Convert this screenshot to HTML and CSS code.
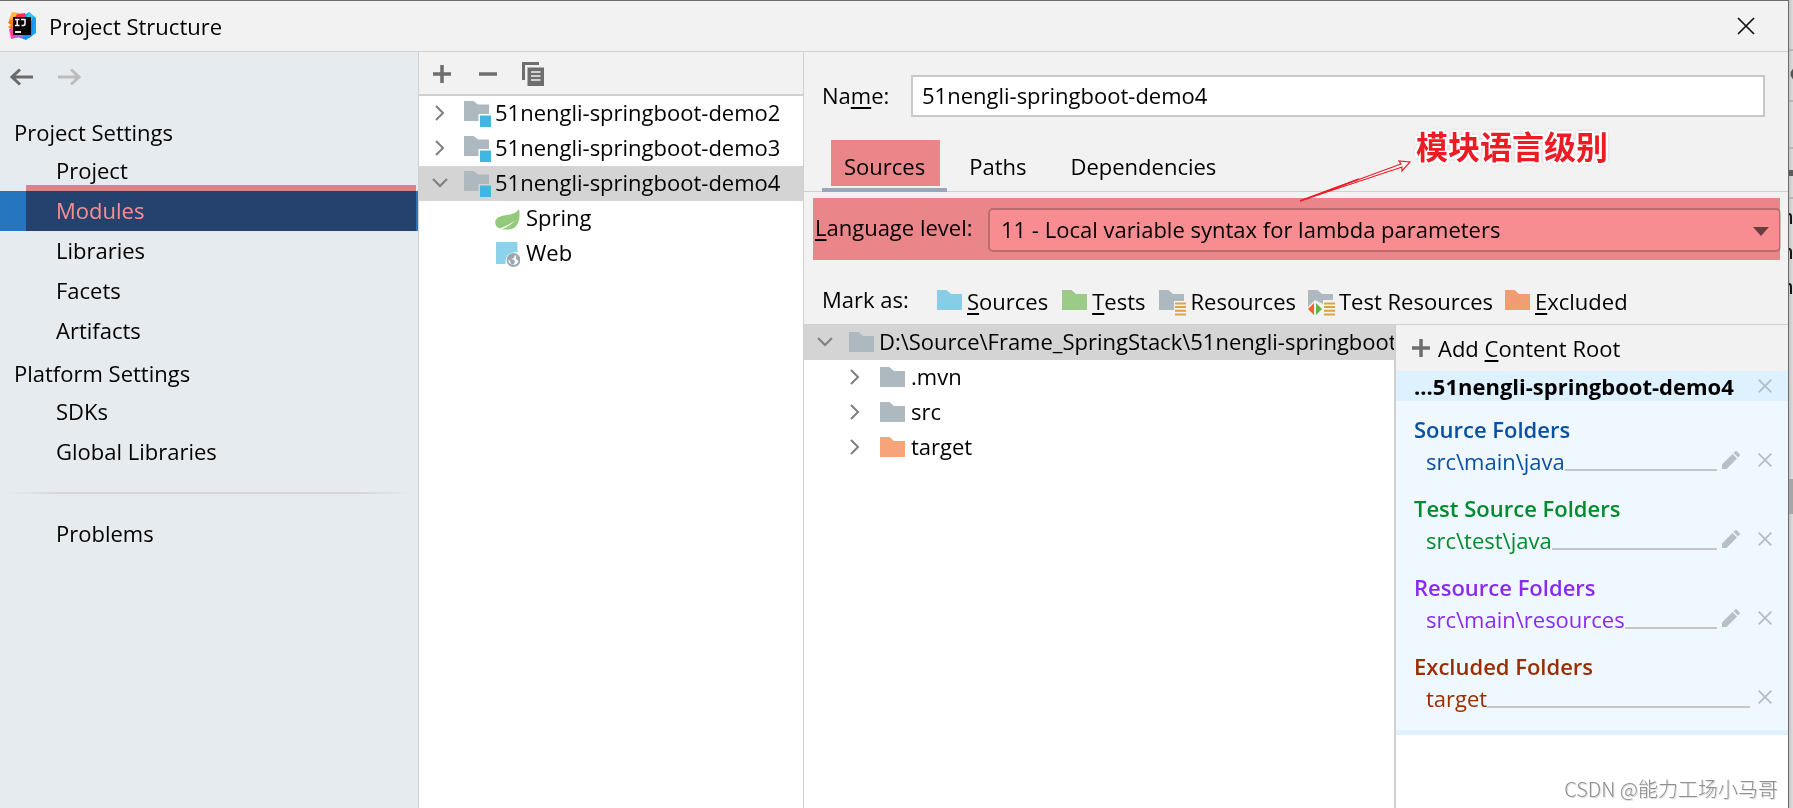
FILE: index.html
```
<!DOCTYPE html>
<html lang="en">
<head>
<meta charset="utf-8">
<title>Project Structure</title>
<link rel="stylesheet" href="styles.css">
</head>
<body>
<svg class="defs" aria-hidden="true">
  <symbol id="folder" viewBox="0 0 25 20"><path d="M0 0h9.500l4.500 4h11v16H0z" fill="currentColor"/></symbol>
  <symbol id="right" viewBox="0 0 16 16"><path d="M4 1l7 7-7 7" fill="none" stroke="#7f7f7f" stroke-width="2"/></symbol>
  <symbol id="down" viewBox="0 0 16 16"><path d="M1 4l7 7 7-7" fill="none" stroke="#7f7f7f" stroke-width="2"/></symbol>
  <symbol id="plus" viewBox="0 0 18 18"><path d="M9 0v18M0 9h18" stroke="#6e6e6e" stroke-width="3.500"/></symbol>
  <symbol id="cross" viewBox="0 0 14 14"><path d="M.7.700l12.600 12.600M13.300.700L.7 13.300" stroke="#b3bdc7" stroke-width="1.800"/></symbol>
  <symbol id="pencil" viewBox="0 0 18 18"><path d="M0 18v-4.500L10.500 3 15 7.500 4.500 18zM11.600 1.900L13 .6q1-1 2 0L17.400 3q1 1 0 2L16.100 6.400z" fill="#b7bfc7"/></symbol>
  <symbol id="module" viewBox="0 0 28 26"><path d="M0 0h9.500l4.500 3.500h11V13h-10.500v7H0z" fill="#adb8bf"/><path d="M16 14.500h11V26H16z" fill="#40b6e0"/></symbol>
  <symbol id="lines" viewBox="0 0 11 14"><path d="M0 1.500h11M0 5h11M0 8.700h11M0 12.500h11" stroke="#dda343" stroke-width="2"/></symbol>
</svg>

<div class="dialog">
  <header class="titlebar">
    <svg class="logo" viewBox="0 0 28 28">
      <path d="M4 0l7 1 2 4-8 6-4-3z" fill="#fdb83c"/><path d="M9 2l8-1 4 7-12 4-4-3z" fill="#fe315d"/>
      <path d="M2 7l6 3-1 9-7-4 3-2-3-2z" fill="#ff7a24"/><path d="M17 3l4-3 7 6v15l-7 5-6-8z" fill="#12a5f5"/>
      <path d="M20 1l6 5-2 18-6 4-8-3 3-8z" fill="#1690f7"/><path d="M21 0l4 4-1 5-6-3z" fill="#22d4ef"/>
      <path d="M1 17l8-2 6 11-3-1-9 2z" fill="#f548a5"/><path d="M9 21l7 3-4 1-6 1z" fill="#a36bea"/>
      <path d="M5 5h18v18H5z" fill="#080303"/><path d="M7 7.500h4.500M9.200 7.500v6M7 13.500h4.500M13 7.500h4v4.500q0 1.700-3.500 1.500" fill="none" stroke="#fff" stroke-width="1.500"/>
      <path d="M7 19h6v2H7z" fill="#eee"/>
    </svg>
    <h1 class="title">Project Structure</h1>
    <button class="close" aria-label="Close"><svg viewBox="0 0 18 18"><path d="M1 1l16 16M17 1L1 17" stroke="#111" stroke-width="1.700"/></svg></button>
  </header>

  <div class="content">
    <nav class="sidebar">
      <div class="history">
        <button aria-label="Back"><svg viewBox="0 0 24 18"><path d="M23 9H3M10 1.500L2 9l8 7.500" fill="none" stroke="#6b6b6b" stroke-width="3"/></svg></button>
        <button aria-label="Forward"><svg viewBox="0 0 24 18"><path d="M1 9h20M14 1.500L22 9l-8 7.500" fill="none" stroke="#bcbcbc" stroke-width="3"/></svg></button>
      </div>
      <h2>Project Settings</h2>
      <a href="#project">Project</a>
      <a href="#modules" class="current">Modules<span class="mark mark-nav"></span></a>
      <a href="#libraries">Libraries</a>
      <a href="#facets">Facets</a>
      <a href="#artifacts">Artifacts</a>
      <h2>Platform Settings</h2>
      <a href="#sdks">SDKs</a>
      <a href="#global">Global Libraries</a>
      <hr>
      <a href="#problems">Problems</a>
    </nav>

    <section class="modules">
      <div class="toolbar">
        <button aria-label="Add"><svg class="i18"><use href="#plus"/></svg></button>
        <button aria-label="Remove"><svg class="i18" viewBox="0 0 18 18"><path d="M0 9h18" stroke="#6e6e6e" stroke-width="3.500"/></svg></button>
        <button aria-label="Copy"><svg class="copy" viewBox="0 0 22 24"><path d="M0 0h17v3H3v15H0z" fill="#6e6e6e"/><path d="M5.500 5.500H22V24H5.500z" fill="#6e6e6e"/><path d="M9 10h9.500M9 14h9.500M9 18h9.500" stroke="#f2f2f2" stroke-width="1.600"/></svg></button>
      </div>
      <ul class="tree">
        <li><svg class="chev"><use href="#right"/></svg><svg class="mod"><use href="#module"/></svg>51nengli-springboot-demo2</li>
        <li><svg class="chev"><use href="#right"/></svg><svg class="mod"><use href="#module"/></svg>51nengli-springboot-demo3</li>
        <li class="selected"><svg class="chev"><use href="#down"/></svg><svg class="mod"><use href="#module"/></svg>51nengli-springboot-demo4</li>
        <li class="facet"><svg class="facet-icon" viewBox="0 0 25 25"><path d="M24 2C26 12 23 22.500 13 22.500H6q9-3 15-10-7 6-16 9L2 20Q-2 14 3 10.500c7-4 16-1 21-8.500z" fill="#93c97b"/></svg>Spring</li>
        <li class="facet"><svg class="facet-icon" viewBox="0 0 25 25"><path d="M1 0h21.500v10.500Q10 9 10.500 22H1z" fill="#8bd3ea"/><circle cx="18.500" cy="18" r="6" fill="#fff" stroke="#9aa7b0" stroke-width="1.800"/><path d="M13 15l4-3 3 1-1 3-3 1 3 1 1 2-2 3-2-1-1-3-2-2zM21 13l3 3v3l-3-2z" fill="#9aa7b0"/></svg>Web</li>
      </ul>
    </section>

    <main class="editor">
      <div class="name-row">
        <label for="name">Na<u>m</u>e:</label>
        <input id="name" type="text" value="51nengli-springboot-demo4">
      </div>
      <div class="tabs" role="tablist">
        <button role="tab" aria-selected="true" class="active">Sources<span class="mark mark-tab"></span></button>
        <button role="tab">Paths</button>
        <button role="tab">Dependencies</button>
        <div class="callout">模块语言级别
          <svg viewBox="0 0 112 42"><path d="M1 41L102 4l-2-3 11 1-8 9v-4z" fill="#fff" stroke="#ed1c24" stroke-width="1.200"/><path d="M1 41L60 19" stroke="#ed1c24" stroke-width="1.600"/></svg>
        </div>
      </div>
      <div class="level-row">
        <label for="level"><u>L</u>anguage level:</label>
        <div class="select">
          <select id="level"><option>11 - Local variable syntax for lambda parameters</option></select>
          <svg viewBox="0 0 16 9"><path d="M0 0h16L8 9z" fill="#6e6e6e"/></svg>
        </div>
        <span class="mark mark-level"></span>
      </div>
      <div class="mark-row">
        <span class="mark-label">Mark as:</span>
        <button><svg class="folder blue"><use href="#folder"/></svg><span><u>S</u>ources</span></button>
        <button><svg class="folder green"><use href="#folder"/></svg><span><u>T</u>ests</span></button>
        <button class="wide"><svg class="res" viewBox="0 0 27 26"><path d="M0 0h9.500l4.500 4h11v7H15v9H0z" fill="#adb8bf"/><use href="#lines" x="16" y="12" width="11" height="14"/></svg><span>Resources</span></button>
        <button class="wide"><svg class="res" viewBox="0 0 27 26"><path d="M0 0h9.500l4.500 4h11v6H15v4l-8-4-7 7z" fill="#adb8bf"/><path d="M6 13v12l-6-6z" fill="#f26522"/><path d="M8 13v12l6-6z" fill="#62b543"/><use href="#lines" x="16" y="12" width="11" height="14"/></svg><span>Test Resources</span></button>
        <button><svg class="folder coral"><use href="#folder"/></svg><span><u>E</u>xcluded</span></button>
      </div>

      <div class="roots">
        <ul class="tree files">
          <li class="selected root"><svg class="chev"><use href="#down"/></svg><svg class="folder grey"><use href="#folder"/></svg><span>D:\Source\Frame_SpringStack\51nengli-springboot</span></li>
          <li><svg class="chev"><use href="#right"/></svg><svg class="folder grey"><use href="#folder"/></svg>.mvn</li>
          <li><svg class="chev"><use href="#right"/></svg><svg class="folder grey"><use href="#folder"/></svg>src</li>
          <li><svg class="chev"><use href="#right"/></svg><svg class="folder orange"><use href="#folder"/></svg>target</li>
        </ul>
        <aside class="content-roots">
          <button class="add-root"><svg class="i18"><use href="#plus"/></svg><span>Add <u>C</u>ontent Root</span></button>
          <div class="root-head"><strong>...51nengli-springboot-demo4</strong><button aria-label="Remove root"><svg class="cross"><use href="#cross"/></svg></button></div>
          <div class="groups">
            <section class="source"><h3>Source Folders</h3><div class="path"><span>src\main\java</span><i></i><button aria-label="Edit"><svg class="i18"><use href="#pencil"/></svg></button><button aria-label="Remove"><svg class="cross"><use href="#cross"/></svg></button></div></section>
            <section class="test"><h3>Test Source Folders</h3><div class="path"><span>src\test\java</span><i></i><button aria-label="Edit"><svg class="i18"><use href="#pencil"/></svg></button><button aria-label="Remove"><svg class="cross"><use href="#cross"/></svg></button></div></section>
            <section class="resource"><h3>Resource Folders</h3><div class="path"><span>src\main\resources</span><i></i><button aria-label="Edit"><svg class="i18"><use href="#pencil"/></svg></button><button aria-label="Remove"><svg class="cross"><use href="#cross"/></svg></button></div></section>
            <section class="excluded"><h3>Excluded Folders</h3><div class="path"><span>target</span><i></i><button aria-label="Remove"><svg class="cross"><use href="#cross"/></svg></button></div></section>
          </div>
        </aside>
      </div>
    </main>
  </div>
</div>

<div class="behind">
  <svg width="4" height="520" viewBox="0 0 4 520"><path d="M0 50h4M0 101h4M0 148h4M0 198h4" stroke="#aaa" stroke-width="1.500"/><circle cx="8" cy="74" r="6.500" fill="#555"/><path d="M0 170h4v6H0z" fill="#5c5c5c"/><path d="M0 214q2 0 2 3v7M0 249q2 0 2 3v7M0 284q2 0 2 3v7" fill="none" stroke="#1b1410" stroke-width="2"/><path d="M0 479h4v35H0z" fill="#a6a6a6"/></svg>
</div>
<div class="watermark">CSDN @能力工场小马哥</div>
</body>
</html>
```
FILE: styles.css
```
* { box-sizing: border-box; }

body {
  margin: 0;
  min-height: 100vh;
  display: flex;
  position: relative;
  overflow: hidden;
  background: #fff;
  color: #000;
  font: 22px/34px "Open Sans", "Noto Sans CJK SC", sans-serif;
}

h1, h2, h3, ul { margin: 0; padding: 0; font: inherit; list-style: none; }
button, input, select { font: inherit; color: inherit; }
button { border: 0; padding: 0; background: none; display: flex; align-items: center; }
svg { display: block; flex: none; }
u { text-decoration-thickness: 2px; text-underline-offset: 3px; }

.defs { position: absolute; width: 0; height: 0; }
.i18 { width: 18px; height: 18px; }
.cross { width: 14px; height: 14px; }

.dialog {
  flex: 1;
  min-width: 0;
  display: flex;
  flex-direction: column;
  background: #f2f2f2;
  border-top: 1px solid #6e6b6e;
  border-right: 1px solid #6e6b6e;
}

.behind { width: 4px; background: linear-gradient(90deg, #c4c4c4, #dedede); }

.titlebar {
  display: flex;
  align-items: center;
  height: 51px;
  padding: 0 33px 0 8px;
  border-bottom: 1px solid #d0d0d0;
}
.logo { width: 28px; height: 28px; }
.title { flex: 1; margin-left: 13px; }
.close svg { width: 18px; height: 18px; }

.content { flex: 1; display: flex; min-width: 0; }

/* Highlighter strokes tint whatever they cover */
.mark { position: absolute; background: #f78d91; mix-blend-mode: multiply; pointer-events: none; }
.mark-nav { inset: -6px 2px 0 26px; }
.mark-tab { inset: 0 7px 2px 9px; }
.mark-level { inset: 6px 8px 0 9px; }

.sidebar { width: 419px; flex: none; background: #e6ebef; border-right: 1px solid #d0d0d0; }
.history { display: flex; gap: 23px; height: 58px; padding: 16px 0 0 10px; align-items: flex-start; }
.history svg { width: 24px; height: 18px; }
.sidebar h2 { padding: 3px 0 0 14px; line-height: 38px; }
.sidebar a {
  display: block;
  position: relative;
  padding: 0 0 2px 56px;
  line-height: 38px;
  color: inherit;
  text-decoration: none;
}
.sidebar .current { background: #2675bf; color: #fff; }
.sidebar hr {
  height: 2px;
  margin: 20px 8px;
  border: 0;
  background: linear-gradient(90deg, transparent, #d6d6d8 12%, #d6d6d8 88%, transparent);
}

.modules { width: 385px; flex: none; background: #fff; border-right: 1px solid #d0d0d0; }
.toolbar {
  display: flex;
  align-items: center;
  height: 44px;
  gap: 28px;
  padding: 1px 0 0 14px;
  background: #f2f2f2;
  border-bottom: 2px solid #d0d0d0;
}
.toolbar button:last-child { margin-left: -3px; }
.copy { width: 22px; height: 24px; }

.tree li {
  display: flex;
  align-items: center;
  height: 35px;
  padding: 0 0 3px 13px;
  white-space: nowrap;
}
.tree .selected { background: #d4d4d4; }
.tree svg { margin-top: 1px; }
.chev { width: 16px; height: 16px; }
.tree .mod { width: 28px; height: 26px; margin: 4px 3px 0 16px; }
.tree .facet { padding-left: 76px; }
.tree .facet-icon { width: 25px; height: 25px; margin: 4px 6px 0 0; }

.folder { width: 25px; height: 20px; }
.grey { color: #adb8bf; }
.orange { color: #f7a47b; }
.coral { color: #f09d74; }
.blue { color: #87cde6; }
.green { color: #9bcb87; }

.editor { flex: 1; min-width: 0; display: flex; flex-direction: column; }
.name-row { display: flex; align-items: center; padding: 23px 23px 0 18px; }
.name-row label { width: 89px; padding-bottom: 2px; }
.name-row input {
  flex: 1;
  min-width: 0;
  height: 42px;
  padding: 0 9px 2px;
  border: 2px solid #c8c8c8;
  background: #fff;
}

.tabs {
  display: flex;
  position: relative;
  height: 52px;
  margin-top: 23px;
  padding-left: 18px;
  border-bottom: 1px solid #d0d0d0;
}
.tabs button { position: relative; height: 52px; padding: 4px 22px 0; border-bottom: 4px solid transparent; }
.tabs .active { border-color: #9aa7b8; }

.callout {
  position: absolute;
  left: 612px;
  top: -19px;
  color: #ed1c24;
  font: bold 32px/48px "Noto Sans CJK SC", sans-serif;
  white-space: nowrap;
  text-shadow: 2px 0 #fff, -2px 0 #fff, 0 2px #fff, 0 -2px #fff, 2px 2px #fff, -2px -2px #fff, 2px -2px #fff, -2px 2px #fff, 0 0 4px #777;
}
.callout svg { position: absolute; width: 112px; height: 42px; left: -117px; top: 39px; z-index: 1; }

.level-row { display: flex; align-items: center; position: relative; padding: 16px 7px 8px 11px; }
.level-row label { width: 173px; padding-bottom: 6px; white-space: nowrap; }
.select { flex: 1; min-width: 0; position: relative; }
.select select {
  display: block;
  appearance: none;
  width: 100%;
  height: 44px;
  padding: 0 40px 2px 11px;
  border: 2px solid #c2c2c2;
  border-radius: 5px;
  background: #fff;
}
.select svg { position: absolute; right: 12px; top: 19px; width: 16px; height: 9px; }

.mark-row { display: flex; align-items: center; height: 64px; padding: 18px 0 0 18px; white-space: nowrap; }
.mark-label { width: 115px; padding-bottom: 4px; }
.mark-row button { gap: 5px; margin-right: 14px; }
.mark-row .wide { gap: 4px; margin-right: 12px; }
.mark-row .folder { margin-bottom: 2px; }
.res { width: 27px; height: 26px; margin-top: 4px; }

.roots { flex: 1; display: flex; min-width: 0; border-top: 1px solid #d0d0d0; }
.files { flex: 1; min-width: 0; overflow: hidden; background: #fff; }
.tree.files li { padding-left: 43px; }
.tree.files .root { padding-left: 13px; }
.tree.files .folder { margin: 1px 6px 0 17px; }
.tree.files .root .folder { margin: 1px 5px 0 16px; }

.content-roots { width: 394px; flex: none; background: #fff; border-left: 2px solid #d0d0d0; }
.add-root { width: 100%; height: 46px; gap: 8px; padding-left: 16px; background: #f2f2f2; }
.root-head {
  display: flex;
  align-items: center;
  justify-content: space-between;
  height: 30px;
  padding: 0 16px 1px 18px;
  background: #def1ff;
}
.root-head strong { font-weight: 700; }
.groups h3 { font-weight: 600; }
.groups { padding: 16px 16px 0 18px; background: #f0f8ff; border-bottom: 5px solid #def1ff; }
.groups section { height: 79px; }
.groups section:last-child { height: 76px; }
.groups h3 { line-height: 24px; }
.path { display: flex; align-items: center; height: 39px; padding-left: 12px; }
.path i { flex: 1; height: 2px; align-self: flex-end; margin-bottom: 9px; background: #c5c5c5; }
.path button { margin-bottom: 2px; }
.path i + button { margin-left: 5px; }
.path button + button { margin-left: 18px; }
.path i + button:last-child { margin-left: 8px; }
.source { color: #0a50a1; }
.test { color: #008c2e; }
.resource { color: #8a2bf2; }
.excluded { color: #992e00; }

.watermark {
  position: absolute;
  right: 15px;
  bottom: 2px;
  font: 300 20px/34px "Noto Sans CJK SC", sans-serif;
  color: #8f8f8f;
  text-shadow: 1px 1px #ddd;
}
```
